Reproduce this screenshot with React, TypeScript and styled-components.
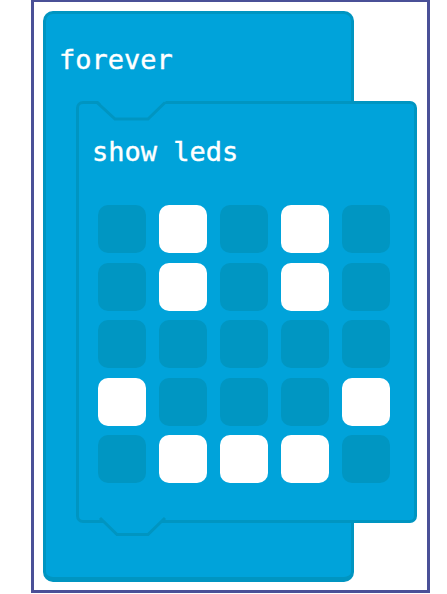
import React from "react";
import styled, { createGlobalStyle } from "styled-components";

const FILL = "#00a3da";
const DARK = "#0095c1";
const LED_OFF = "#0096c2";

const Global = createGlobalStyle`
  html, body { margin: 0; padding: 0; background: #ffffff; }
  body { overflow: hidden; }
`;

const Frame = styled.div`
  box-sizing: border-box;
  margin-left: 31px;
  margin-top: -1px;
  width: 399px;
  height: 594px;
  border: 3px solid #4a5097;
  padding: 9px 0 0 9px;
`;

const Block = styled.div<{ $w: number; $h: number }>`
  position: relative;
  box-sizing: border-box;
  width: ${(p) => p.$w}px;
  height: ${(p) => p.$h}px;
  flex-shrink: 0;
  background: ${FILL};
  border: 3px solid ${DARK};
  border-radius: 10px;
  display: flex;
  flex-direction: column;
  align-items: flex-start;
`;

const ForeverBlock = styled(Block)`
  border-bottom-width: 5px;
  padding: 30px 0 0 13px;
`;

const LedsBlock = styled(Block)`
  border-radius: 7px;
  margin: 26px 0 0 17px;
  padding: 32px 0 0 6px;
`;

const Label = styled.div`
  font-family: "DejaVu Sans Mono", "Liberation Mono", monospace;
  font-weight: 400;
  font-size: 27px;
  line-height: 31px;
  color: #ffffff;
  white-space: pre;
  -webkit-text-stroke: 0.4px #ffffff;
`;

const LedsLabel = styled(Label)`
  margin-left: 7px;
`;

const Grid = styled.div`
  margin-top: 38px;
  margin-left: 13px;
  display: grid;
  grid-template-columns: repeat(5, 48px);
  grid-auto-rows: 48px;
  column-gap: 13px;
  row-gap: 9.5px;
`;

const Led = styled.div<{ $on: boolean }>`
  border-radius: 10px;
  background: ${(p) => (p.$on ? "#ffffff" : LED_OFF)};
`;

const Notch = styled.svg<{ $bottom?: boolean }>`
  position: absolute;
  left: -3px;
  width: 100px;
  height: 22px;
  overflow: visible;
  ${(p) => (p.$bottom ? "bottom: -19px;" : "top: -3px;")}
`;

const pattern = [
  [0, 1, 0, 1, 0],
  [0, 1, 0, 1, 0],
  [0, 0, 0, 0, 0],
  [1, 0, 0, 0, 1],
  [0, 1, 1, 1, 0],
];

export default function App() {
  return (
    <>
      <Global />
      <Frame>
        <ForeverBlock $w={311} $h={571}>
          <Label>forever</Label>
          <LedsBlock $w={341} $h={422}>
            <Notch viewBox="0 0 100 22">
              <polygon points="22,0 39,17 73,17 90,0" fill={FILL} />
              <polyline
                points="21,1.5 39,18 72,18 89,1.5"
                fill="none"
                stroke={DARK}
                strokeWidth="3"
                strokeLinejoin="miter"
              />
            </Notch>
            <Notch $bottom viewBox="0 0 100 22">
              <polygon points="24,0 41,17 72,17 89,0" fill={FILL} />
              <polyline
                points="24,1 41,17.5 72,17.5 89,1"
                fill="none"
                stroke={DARK}
                strokeWidth="3"
              />
            </Notch>
            <LedsLabel>show leds</LedsLabel>
            <Grid>
              {pattern.flat().map((v, i) => (
                <Led key={i} $on={v === 1} />
              ))}
            </Grid>
          </LedsBlock>
        </ForeverBlock>
      </Frame>
    </>
  );
}
